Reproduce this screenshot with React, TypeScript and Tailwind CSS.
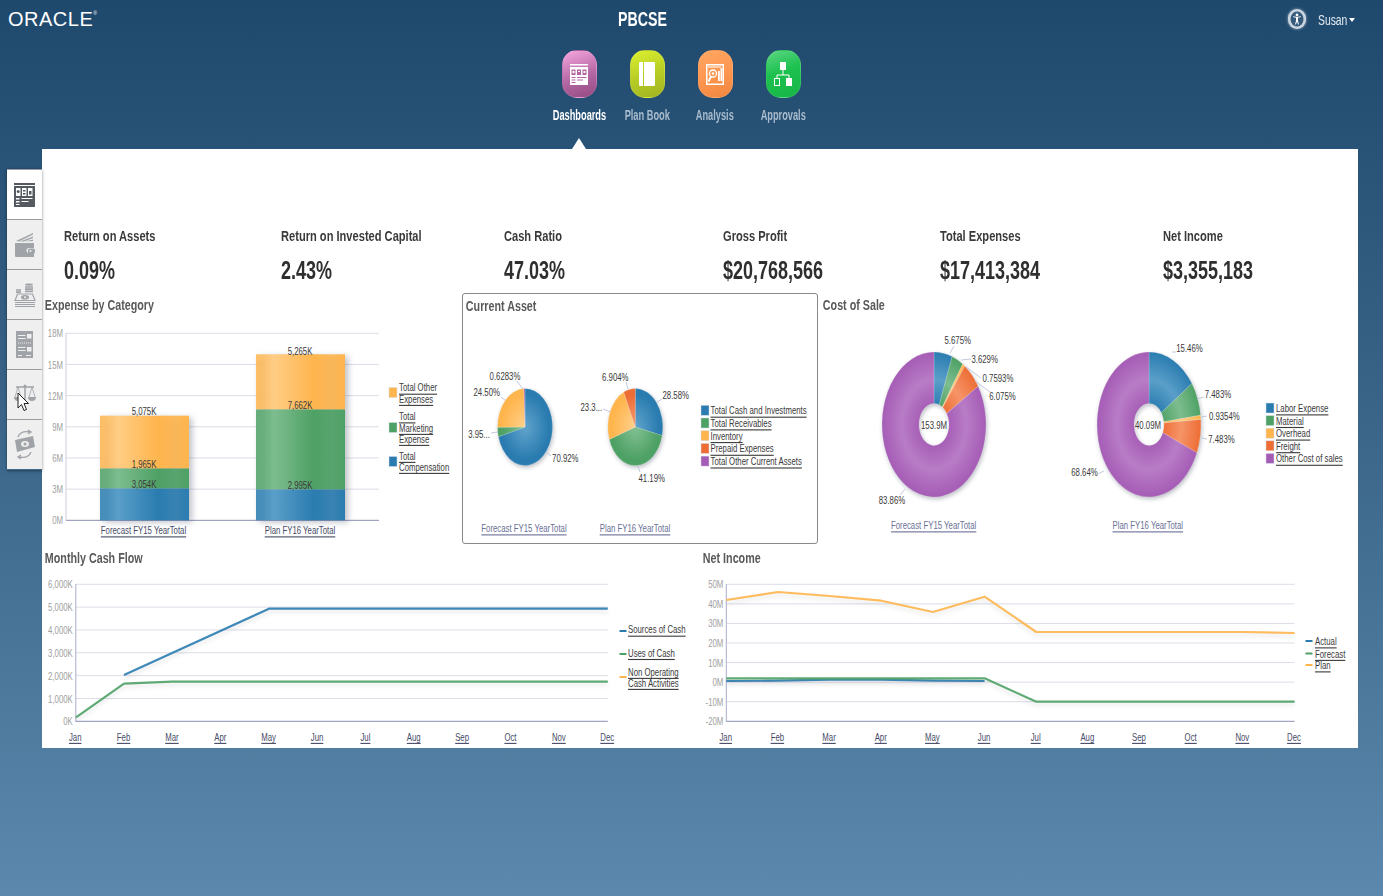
import React from "react";

const FONT = '"Liberation Sans", Arial, sans-serif';
const COLORS: Record<string, string> = {
  blue: "#2a7cb0",
  green: "#4ea165",
  orange: "#ffb54d",
  red: "#ed6d35",
  purple: "#a55cb5",
};
const LIGHT: Record<string, string> = {
  blue: "#5a9fc9",
  green: "#7dbd8f",
  orange: "#ffcd85",
  red: "#f69468",
  purple: "#b87cc6",
};

type TProps = {
  x: number;
  y: number;
  s?: number;
  k?: number;
  a?: "start" | "middle" | "end";
  c?: string;
  u?: boolean;
  children: React.ReactNode;
};

// chart text, squeezed horizontally like the rest of the screenshot
function T({ x, y, s = 11, k = 0.71, a = "middle", c = "#3a3a3a", u, children }: TProps) {
  return (
    <text
      transform={`translate(${x} ${y}) scale(${k} 1)`}
      textAnchor={a}
      dominantBaseline="central"
      fontSize={s}
      fill={c}
      textDecoration={u ? "underline" : undefined}
    >
      {children}
    </text>
  );
}

function Leader({ d }: { d: string }) {
  return <path d={d} fill="none" stroke="#c3cadd" strokeWidth={1} />;
}

function Swatch({ x, y, color }: { x: number; y: number; color: string }) {
  return <rect x={x} y={y - 5} width={8} height={10} fill={COLORS[color]} stroke="#d5dbe8" strokeWidth={0.5} />;
}

function Pie({
  id,
  cx,
  cy,
  rx,
  ry,
  hole,
  slices,
}: {
  id: string;
  cx: number;
  cy: number;
  rx: number;
  ry: number;
  hole?: [number, number];
  slices: [string, number][];
}) {
  const point = (f: number, a: number, b: number) => {
    const t = f * Math.PI * 2;
    return `${(cx + a * Math.sin(t)).toFixed(2)} ${(cy - b * Math.cos(t)).toFixed(2)}`;
  };
  let start = 0;
  const paths = slices.map(([color, pct]) => {
    const from = start;
    const to = start + pct / 100;
    start = to;
    const large = to - from > 0.5 ? 1 : 0;
    const d = hole
      ? `M${point(from, rx, ry)}A${rx} ${ry} 0 ${large} 1 ${point(to, rx, ry)}L${point(to, hole[0], hole[1])}A${hole[0]} ${hole[1]} 0 ${large} 0 ${point(from, hole[0], hole[1])}Z`
      : `M${cx} ${cy}L${point(from, rx, ry)}A${rx} ${ry} 0 ${large} 1 ${point(to, rx, ry)}Z`;
    return (
      <path key={color} d={d} fill={`url(#${id}-${color})`} stroke="#ffffff" strokeOpacity={0.35} strokeWidth={0.5} />
    );
  });
  return (
    <g className="drop-shadow-[1px_2px_2px_rgba(60,70,90,0.35)]">
      <defs>
        {slices.map(([color]) => (
          <radialGradient
            key={color}
            id={`${id}-${color}`}
            gradientUnits="userSpaceOnUse"
            cx={0}
            cy={0}
            r={1}
            gradientTransform={`translate(${cx} ${cy}) scale(${rx} ${ry})`}
          >
            {hole ? (
              <>
                <stop offset="0.25" stopColor={COLORS[color]} />
                <stop offset="0.62" stopColor={LIGHT[color]} />
                <stop offset="1" stopColor={COLORS[color]} />
              </>
            ) : (
              <>
                <stop offset="0.1" stopColor={LIGHT[color]} />
                <stop offset="0.85" stopColor={COLORS[color]} />
              </>
            )}
          </radialGradient>
        ))}
      </defs>
      {paths}
    </g>
  );
}

function BarGradients() {
  return (
    <defs>
      {Object.keys(COLORS).map((name) => (
        <linearGradient key={name} id={`bar-${name}`} x1="0" x2="1" y1="0" y2="0">
          <stop offset="0" stopColor={COLORS[name]} stopOpacity={0.85} />
          <stop offset="0.2" stopColor={LIGHT[name]} />
          <stop offset="0.65" stopColor={COLORS[name]} />
          <stop offset="0.85" stopColor={COLORS[name]} stopOpacity={0.9} />
          <stop offset="1" stopColor={COLORS[name]} />
        </linearGradient>
      ))}
    </defs>
  );
}

function ExpenseChart() {
  const ticks = ["18M", "15M", "12M", "9M", "6M", "3M", "0M"];
  return (
    <svg viewBox="42 316 418 228" className="mt-[1px] block w-[418px] h-[228px]" fontFamily={FONT}>
      <BarGradients />
      {ticks.map((t, i) => {
        const y = 333.3 + i * 31.17;
        return (
          <g key={t}>
            <line x1={66} x2={379} y1={y} y2={y} stroke={i === 6 ? "#8c8fb5" : "#dcdde6"} strokeWidth={1} />
            <T x={63} y={y} a="end" c="#a0a0a0" s={11}>{t}</T>
          </g>
        );
      })}
      <line x1={66} x2={66} y1={333} y2={521} stroke="#c9cbdc" />
      <g className="drop-shadow-[3px_2px_3px_rgba(60,70,90,0.35)]">
        <rect x={100} y={488.3} width={89} height={32} fill="url(#bar-blue)" />
        <rect x={100} y={468.3} width={89} height={20} fill="url(#bar-green)" />
        <rect x={100} y={415.7} width={89} height={52.6} fill="url(#bar-orange)" />
        <rect x={256} y={489.3} width={89} height={31} fill="url(#bar-blue)" />
        <rect x={256} y={409.3} width={89} height={80} fill="url(#bar-green)" />
        <rect x={256} y={354.3} width={89} height={55} fill="url(#bar-orange)" />
      </g>
      <T x={144} y={411}>5,075K</T>
      <T x={144} y={464}>1,965K</T>
      <T x={144} y={484}>3,054K</T>
      <T x={300} y={351}>5,265K</T>
      <T x={300} y={405}>7,662K</T>
      <T x={300} y={485}>2,995K</T>
      <T x={143.5} y={530} u c="#454a66">Forecast FY15 YearTotal</T>
      <T x={300} y={530} u c="#454a66">Plan FY16 YearTotal</T>
      <Swatch x={389} y={392.5} color="orange" />
      <Swatch x={389} y={427.5} color="green" />
      <Swatch x={389} y={461.5} color="blue" />
      <T x={399} y={387.3} a="start" u>Total Other</T>
      <T x={399} y={398.5} a="start" u>Expenses</T>
      <T x={399} y={416} a="start" u>Total</T>
      <T x={399} y={427.5} a="start" u>Marketing</T>
      <T x={399} y={438.5} a="start" u>Expense</T>
      <T x={399} y={455.5} a="start" u>Total</T>
      <T x={399} y={466.5} a="start" u>Compensation</T>
    </svg>
  );
}

function CurrentAssetChart() {
  const legend: [string, string][] = [
    ["blue", "Total Cash and Investments"],
    ["green", "Total Receivables"],
    ["orange", "Inventory"],
    ["red", "Prepaid Expenses"],
    ["purple", "Total Other Current Assets"],
  ];
  return (
    <svg viewBox="463 316 354 227" className="block w-[354px] h-[227px]" fontFamily={FONT}>
      <Pie
        id="ca1"
        cx={525}
        cy={427}
        rx={27.5}
        ry={38.5}
        slices={[
          ["blue", 70.92],
          ["green", 3.95],
          ["orange", 24.5],
          ["purple", 0.63],
        ]}
      />
      <Pie
        id="ca2"
        cx={635.3}
        cy={427}
        rx={27.5}
        ry={38.5}
        slices={[
          ["blue", 28.58],
          ["green", 41.19],
          ["orange", 23.33],
          ["red", 6.9],
        ]}
      />
      <Leader d="M517 381L523 389" />
      <Leader d="M501 397L505 400" />
      <Leader d="M491 433L498 432" />
      <Leader d="M546 452L551 456" />
      <Leader d="M626 382L628 389" />
      <Leader d="M657 402L662 399" />
      <Leader d="M603 409L610 412" />
      <Leader d="M638 466L640 472" />
      <T x={505} y={376}>0.6283%</T>
      <T x={486.7} y={392}>24.50%</T>
      <T x={479} y={434.3}>3.95...</T>
      <T x={565.3} y={458.3}>70.92%</T>
      <T x={615.3} y={377.3}>6.904%</T>
      <T x={675.7} y={395.3}>28.58%</T>
      <T x={591.3} y={407}>23.3...</T>
      <T x={651.7} y={478.3}>41.19%</T>
      <T x={524} y={528} u c="#6a7096">Forecast FY15 YearTotal</T>
      <T x={635} y={528} u c="#6a7096">Plan FY16 YearTotal</T>
      {legend.map(([color, label], i) => (
        <g key={label}>
          <Swatch x={701} y={410.3 + i * 12.7} color={color} />
          <T x={710.5} y={410.3 + i * 12.7} a="start" u>{label}</T>
        </g>
      ))}
    </svg>
  );
}

function CostOfSaleChart() {
  const legend: [string, string][] = [
    ["blue", "Labor Expense"],
    ["green", "Material"],
    ["orange", "Overhead"],
    ["red", "Freight"],
    ["purple", "Other Cost of sales"],
  ];
  return (
    <svg viewBox="820 316 538 228" className="mt-[1px] block w-[538px] h-[228px]" fontFamily={FONT}>
      <Pie
        id="cs1"
        cx={934}
        cy={424.5}
        rx={52}
        ry={72.5}
        hole={[15, 21]}
        slices={[
          ["blue", 5.675],
          ["green", 3.629],
          ["orange", 0.759],
          ["red", 6.075],
          ["purple", 83.86],
        ]}
      />
      <Pie
        id="cs2"
        cx={1149}
        cy={424.5}
        rx={52}
        ry={72.5}
        hole={[15, 21]}
        slices={[
          ["blue", 15.46],
          ["green", 7.483],
          ["orange", 0.935],
          ["red", 7.483],
          ["purple", 68.64],
        ]}
      />
      <Leader d="M950 353L954 346" />
      <Leader d="M961 360L971 359" />
      <Leader d="M966 367L981 378" />
      <Leader d="M975 381L990 392" />
      <Leader d="M905 489L900 495" />
      <Leader d="M1172 352L1176 352" />
      <Leader d="M1197 399L1204 397" />
      <Leader d="M1201 417L1207 416" />
      <Leader d="M1201 438L1207 439" />
      <Leader d="M1104 471L1098 474" />
      <T x={957.7} y={340}>5.675%</T>
      <T x={984.6} y={359}>3.629%</T>
      <T x={998} y={378.3}>0.7593%</T>
      <T x={1002.5} y={396}>6.075%</T>
      <T x={892} y={500}>83.86%</T>
      <T x={934} y={425}>153.9M</T>
      <T x={1189.5} y={348}>15.46%</T>
      <T x={1218} y={394}>7.483%</T>
      <T x={1224.3} y={416}>0.9354%</T>
      <T x={1221.5} y={439}>7.483%</T>
      <T x={1084.5} y={472}>68.64%</T>
      <T x={1148} y={425}>40.09M</T>
      <T x={933.6} y={525} u c="#6a7096">Forecast FY15 YearTotal</T>
      <T x={1147.8} y={525} u c="#6a7096">Plan FY16 YearTotal</T>
      {legend.map(([color, label], i) => (
        <g key={label}>
          <Swatch x={1266} y={408 + i * 12.6} color={color} />
          <T x={1276} y={408 + i * 12.6} a="start" u>{label}</T>
        </g>
      ))}
    </svg>
  );
}

const MONTHS = ["Jan", "Feb", "Mar", "Apr", "May", "Jun", "Jul", "Aug", "Sep", "Oct", "Nov", "Dec"];

function LineAxes({ x0, x1, ticks }: { x0: number; x1: number; ticks: string[] }) {
  const step = (721.3 - 584.3) / (ticks.length - 1);
  const mx = (x1 - x0) / 11;
  return (
    <g>
      {ticks.map((t, i) => {
        const y = 584.3 + i * step;
        return (
          <g key={t}>
            <line x1={x0} x2={x1} y1={y} y2={y} stroke={i === ticks.length - 1 ? "#8c8fb5" : "#dcdde6"} />
            <T x={x0 - 3} y={y} a="end" c="#a0a0a0">{t}</T>
          </g>
        );
      })}
      <line x1={x0} x2={x0} y1={584} y2={722} stroke="#a9accb" />
      {MONTHS.map((m, i) => (
        <T key={m} x={x0 + i * mx - 0.6} y={736.5} u c="#454a66">{m}</T>
      ))}
    </g>
  );
}

function Line({ points, color }: { points: string; color: string }) {
  return (
    <polyline
      points={points}
      fill="none"
      stroke={COLORS[color]}
      strokeOpacity={0.9}
      strokeWidth={2.2}
      strokeLinejoin="round"
      className="drop-shadow-[0px_3px_2px_rgba(60,70,90,0.15)]"
    />
  );
}

function CashFlowChart() {
  return (
    <svg viewBox="42 570 658 178" className="mt-[2px] block w-[658px] h-[178px]" fontFamily={FONT}>
      <LineAxes x0={75.8} x1={607.8} ticks={["6,000K", "5,000K", "4,000K", "3,000K", "2,000K", "1,000K", "0K"]} />
      <Line color="blue" points="124,675 269,608.7 607.8,608.7" />
      <Line color="green" points="76,717.3 124,683.7 172,681.7 607.8,681.7" />
      <rect x={619.5} y={630} width={7} height={2} fill={COLORS.blue} />
      <rect x={619.5} y={653} width={7} height={2} fill={COLORS.green} />
      <rect x={619.5} y={676} width={7} height={2} fill={COLORS.orange} />
      <T x={628} y={629.3} a="start" u>Sources of Cash</T>
      <T x={628} y={652.6} a="start" u>Uses of Cash</T>
      <T x={628} y={671.5} a="start" u>Non Operating</T>
      <T x={628} y={682.5} a="start" u>Cash Activities</T>
    </svg>
  );
}

function NetIncomeChart() {
  const x = (i: number) => (726.3 + i * 51.66).toFixed(1);
  const y = (v: number) => (545 + v / 3).toFixed(1);
  const toPoints = (vals: number[]) => vals.map((v, i) => `${x(i)},${y(v)}`).join(" ");
  return (
    <svg viewBox="700 570 658 178" className="mt-[2px] block w-[658px] h-[178px]" fontFamily={FONT}>
      <LineAxes x0={726.3} x1={1294.6} ticks={["50M", "40M", "30M", "20M", "10M", "0M", "-10M", "-20M"]} />
      <Line color="orange" points={toPoints([165, 141, 153, 167, 201, 155, 261, 261, 261, 261, 261, 264])} />
      <Line color="blue" points={toPoints([408, 407, 404, 404, 407, 408])} />
      <Line color="green" points={toPoints([400, 400, 400, 400, 400, 400, 470, 470, 470, 470, 470, 470])} />
      <rect x={1305.5} y={640} width={7} height={2} fill={COLORS.blue} />
      <rect x={1305.5} y={652.5} width={7} height={2} fill={COLORS.green} />
      <rect x={1305.5} y={664} width={7} height={2} fill={COLORS.orange} />
      <T x={1315} y={641} a="start" u>Actual</T>
      <T x={1315} y={653.5} a="start" u>Forecast</T>
      <T x={1315} y={665} a="start" u>Plan</T>
    </svg>
  );
}

function ChartTitle({ children }: { children: React.ReactNode }) {
  return (
    <h3 className="h-[20px] pl-[4px] text-[15px] leading-[20px] font-bold text-[#595959] whitespace-nowrap origin-left scale-x-[.715]">
      {children}
    </h3>
  );
}

const KPIS = [
  { label: "Return on Assets", value: "0.09%", w: "w-[217px]" },
  { label: "Return on Invested Capital", value: "2.43%", w: "w-[223px]" },
  { label: "Cash Ratio", value: "47.03%", w: "w-[219px]" },
  { label: "Gross Profit", value: "$20,768,566", w: "w-[217px]" },
  { label: "Total Expenses", value: "$17,413,384", w: "w-[223px]" },
  { label: "Net Income", value: "$3,355,183", w: "w-[180px]" },
];

function NavIcon({ name }: { name: string }) {
  if (name === "Dashboards") {
    return (
      <svg viewBox="0 0 18 21" className="w-[18px] h-[21px]">
        <rect x="0" y="0" width="18" height="1.500" fill="#fff" />
        <rect x="0" y="3" width="18" height="18" fill="#fff" />
        <rect x="1.500" y="5.500" width="4" height="5.500" fill="#b366a0" />
        <rect x="7" y="5.500" width="4" height="5.500" fill="#b366a0" />
        <rect x="12.500" y="5.500" width="4" height="5.500" fill="#b366a0" />
        <circle cx="3.500" cy="8" r="1.200" fill="#fff" />
        <path d="M8 7h2v1H8zM13.500 7h2v2h-2z" fill="#fff" />
        <path d="M1.500 13h4v1h-4zM1.500 15.500h4v1h-4zM1.500 18h4v1h-4zM7 13h9.500v1H7zM7 15.500h6v1H7z" fill="#b366a0" />
      </svg>
    );
  }
  if (name === "Plan Book") {
    return (
      <svg viewBox="0 0 16 24" className="w-[16px] h-[24px]">
        <path d="M1 0h3v24H1a1 1 0 0 1-1-1V1a1 1 0 0 1 1-1zM5 0h10a1 1 0 0 1 1 1v22a1 1 0 0 1-1 1H5z" fill="#fff" />
      </svg>
    );
  }
  if (name === "Analysis") {
    return (
      <svg viewBox="0 0 18 21" className="w-[18px] h-[21px]" fill="none" stroke="#fff">
        <rect x="0.750" y="0.750" width="16.500" height="19.500" strokeWidth="1.500" />
        <circle cx="7" cy="9.500" r="3.500" strokeWidth="1.300" />
        <circle cx="7" cy="9.500" r="1.200" fill="#fff" stroke="none" />
        <path d="M5 12.500l-2.500 5" strokeWidth="2" />
        <rect x="12" y="7" width="1.800" height="10" fill="#fff" stroke="none" />
        <rect x="14.500" y="4" width="1.800" height="13" fill="#fff" stroke="none" />
        <path d="M2 3h13" strokeWidth="1" />
      </svg>
    );
  }
  return (
    <svg viewBox="0 0 18 24" className="w-[18px] h-[24px]" fill="none" stroke="#fff">
      <rect x="6" y="0" width="6" height="8" fill="#fff" stroke="none" />
      <path d="M9 8v5M3 16v-3h12v3" strokeWidth="1" />
      <rect x="0.500" y="16.500" width="5" height="7" strokeWidth="1" />
      <rect x="12" y="16" width="6" height="8" fill="#fff" stroke="none" />
    </svg>
  );
}

const NAV = [
  { name: "Dashboards", bg: "bg-[linear-gradient(160deg,#f7a6de,#b468a4_55%,#954a82)]", text: "text-white" },
  { name: "Plan Book", bg: "bg-[linear-gradient(160deg,#dcf02e,#b5cb26_55%,#a2b220)]", text: "text-[#a9bccd]" },
  { name: "Analysis", bg: "bg-[linear-gradient(160deg,#ffa763,#fd954f_55%,#ef8741)]", text: "text-[#a9bccd]" },
  { name: "Approvals", bg: "bg-[linear-gradient(160deg,#5cd683,#1cc14e_45%,#18b548)]", text: "text-[#a9bccd]" },
];

const TAB_GRAY = "#a0a3a8";

function TabIcon({ index }: { index: number }) {
  if (index === 0) {
    return (
      <svg viewBox="0 0 21 24" className="w-[21px] h-[24px]">
        <rect width="21" height="24" fill="#555a60" />
        <rect y="2" width="21" height="1" fill="#fff" />
        <path d="M2 5h4.500v8H2zM8 5h4.500v8H8zM14 5h4.500v8H14z" fill="#fff" />
        <circle cx="4.200" cy="8.500" r="1.500" fill="#555a60" />
        <path d="M9 7h2.500v1.500H9zM9 10h2.500v1.500H9zM15 8h2.500v3.500H15z" fill="#555a60" />
        <path d="M2 15h3.500v1.500H2zM2 18h3.500v1.500H2zM2 21h3.500v1H2zM7.500 15h11v1H7.500zM7.500 18h7v1h-7z" fill="#fff" />
      </svg>
    );
  }
  if (index === 1) {
    return (
      <svg viewBox="0 0 21 24" className="w-[21px] h-[24px]">
        <path d="M2 8L19 0v1.500L5 8.500zM6 8.500l13-5v1.500l-9 3.500zM11 8.500l8-2V8z" fill={TAB_GRAY} />
        <path d="M1 10h19v5h-5a2.500 2.500 0 0 0 0 5h5v4H2a1 1 0 0 1-1-1z" fill={TAB_GRAY} />
        <rect x="14" y="15.500" width="7" height="5" rx="1.500" fill={TAB_GRAY} />
        <circle cx="16.500" cy="18" r="1" fill="#efefef" />
      </svg>
    );
  }
  if (index === 2) {
    return (
      <svg viewBox="0 0 22 24" className="w-[22px] h-[24px]" fill="none" stroke={TAB_GRAY}>
        <ellipse cx="15" cy="1.600" rx="4" ry="1.200" fill={TAB_GRAY} stroke="none" />
        <path d="M11 4h8M11 6.200h8M11 8.400h8M2 7h5M2 9.200h5" strokeWidth="1.700" />
        <path d="M3.500 11h15l2.500 6.500H1z" strokeWidth="1.200" />
        <ellipse cx="11" cy="14.300" rx="4" ry="2.300" fill={TAB_GRAY} stroke="none" />
        <circle cx="11" cy="14.300" r="1" fill="#efefef" stroke="none" />
        <path d="M1 19.500h20M1 21.500h20M1 23.500h20" strokeWidth="1" />
      </svg>
    );
  }
  if (index === 3) {
    return (
      <svg viewBox="0 0 17 27" className="w-[17px] h-[27px]">
        <rect width="17" height="27" fill={TAB_GRAY} />
        <path d="M2 4h7.500v1H2zM2 7h7.500v1H2zM2 16h7.500v1H2zM2 19h7.500v1H2zM2 24h4v1H2zM10 24h5v1h-5z" fill="#eee" />
        <rect x="11" y="3" width="4.500" height="4.500" fill="#eee" />
        <rect x="11" y="16" width="4.500" height="4.500" fill="#eee" />
        <path d="M2 12h13" stroke="#eee" strokeDasharray="1 1" />
      </svg>
    );
  }
  if (index === 4) {
    return (
      <svg viewBox="0 0 22 22" className="w-[22px] h-[22px]" fill="none" stroke={TAB_GRAY}>
        <path d="M11 1v17M2 3h18" strokeWidth="1.500" />
        <circle cx="11" cy="2" r="1.500" fill={TAB_GRAY} stroke="none" />
        <path d="M4 3L1 13M4 3l3 10M18 3l-3 10M18 3l3 10" strokeWidth="0.800" />
        <path d="M0 13h8a4 4 0 0 1-8 0zM14 13h8a4 4 0 0 1-8 0z" fill={TAB_GRAY} stroke="none" />
      </svg>
    );
  }
  return (
    <svg viewBox="0 0 23 31" className="w-[23px] h-[31px]" fill="none" stroke={TAB_GRAY}>
      <path d="M5 8C7 3 12 2 17 3M15 1l3 2-3 2M18 23c-2 5-7 6-12 5M8 30l-3-2 3-2" strokeWidth="1.300" />
      <path d="M2 11l18-4 2 11-18 5z" fill={TAB_GRAY} stroke="none" />
      <ellipse cx="12" cy="15" rx="4" ry="3" fill="#eee" stroke="none" />
      <circle cx="12" cy="15" r="1.500" fill={TAB_GRAY} stroke="none" />
    </svg>
  );
}

export default function App() {
  return (
    <div
      className="relative h-[896px] w-full overflow-hidden bg-gradient-to-b from-[#1e486c] to-[#5b88ac]"
      style={{ fontFamily: FONT }}
    >
      <header className="h-[149px]">
        <div className="flex h-[38px] items-center pl-[8px] pr-[28px]">
          <div className="w-[610px] flex items-start text-white">
            <span className="text-[20px] leading-[20px] tracking-[0.5px]">ORACLE</span>
            <span className="text-[5px] leading-[8px]">®</span>
          </div>
          <h1 className="text-[20px] font-bold text-white origin-left scale-x-[.71] leading-[24px]">PBCSE</h1>
          <div className="ml-auto flex items-center">
            <div className="mr-[12px] flex h-[20px] w-[18px] items-center justify-center rounded-full bg-[#c9d5df] shadow-[0_0_3px_#9fb4c6]">
              <svg viewBox="0 0 14 16" className="w-[14px] h-[16px]">
                <ellipse cx="7" cy="8" rx="6.500" ry="7.500" fill="#34597a" />
                <circle cx="7" cy="4" r="1.400" fill="#fff" />
                <path d="M3 6l3 .8v3L5 13.500h1L7 10.500l1 3h1L8 9.800v-3L11 6l-.2-.7L7 6 3.200 5.300z" fill="#fff" />
              </svg>
            </div>
            <span className="mt-[2px] w-[30px] text-[14px] text-[#e4ecf3] whitespace-nowrap origin-left scale-x-[.74]">Susan</span>
            <span className="ml-[1px] mt-[2px] border-x-[3px] border-t-[4px] border-x-transparent border-t-white" />
          </div>
        </div>
        <nav className="relative ml-[545px] mt-[12px] flex">
          {NAV.map((item) => (
            <div key={item.name} className="flex w-[68px] flex-col items-center">
              <div
                className={`flex h-[48px] w-[35px] items-center justify-center rounded-[15px] border border-white/10 ${item.bg}`}
              >
                <NavIcon name={item.name} />
              </div>
              <span className={`mt-[9px] text-[14px] leading-[16px] font-bold whitespace-nowrap scale-x-[.66] ${item.text}`}>
                {item.name}
              </span>
            </div>
          ))}
          <span className="absolute left-[27px] top-[88px] border-x-[7px] border-b-[11px] border-x-transparent border-b-white" />
        </nav>
      </header>

      <div className="flex pl-[7px]">
        <aside className="mt-[20px] w-[35px] h-[301px] relative z-10 shadow-[0_1px_3px_rgba(0,0,0,0.45)]">
          {[0, 1, 2, 3, 4, 5].map((i) => (
            <div
              key={i}
              className={`flex h-[50px] items-center justify-center border-t border-[#9b9b9b] ${i === 0 ? "bg-white" : "bg-[#efefef]"}`}
            >
              <TabIcon index={i} />
            </div>
          ))}
          <svg viewBox="0 0 12 20" className="absolute left-[10px] top-[223px] w-[12px] h-[20px]">
            <path d="M1 1v15l3.500-3.500 2.500 6 2.500-1-2.500-6h4.500z" fill="#fff" stroke="#222" strokeWidth="1" />
          </svg>
        </aside>

        <main className="h-[599px] w-[1316px] bg-white">
          <div className="flex h-[144px] pl-[22px] pt-[78px]">
            {KPIS.map((k) => (
              <div key={k.label} className={k.w}>
                <div className="text-[15px] leading-[18px] font-bold text-[#3a3a3a] whitespace-nowrap origin-left scale-x-[.74]">
                  {k.label}
                </div>
                <div className="mt-[10px] text-[25px] leading-[30px] font-bold text-[#2f2f2f] whitespace-nowrap origin-left scale-x-[.72]">
                  {k.value}
                </div>
              </div>
            ))}
          </div>

          <div className="flex h-[252px]">
            <section className="w-[420px] pt-[2px]">
              <ChartTitle>Expense by Category</ChartTitle>
              <ExpenseChart />
            </section>
            <section className="h-[251px] w-[356px] rounded-[3px] border border-[#8a8a8a] pt-[2px]">
              <ChartTitle>Current Asset</ChartTitle>
              <CurrentAssetChart />
            </section>
            <section className="ml-[2px] w-[538px] pt-[2px]">
              <ChartTitle>Cost of Sale</ChartTitle>
              <CostOfSaleChart />
            </section>
          </div>

          <div className="flex">
            <section className="w-[658px] pt-[3px]">
              <ChartTitle>Monthly Cash Flow</ChartTitle>
              <CashFlowChart />
            </section>
            <section className="w-[658px] pt-[3px]">
              <ChartTitle>Net Income</ChartTitle>
              <NetIncomeChart />
            </section>
          </div>
        </main>
      </div>
    </div>
  );
}
